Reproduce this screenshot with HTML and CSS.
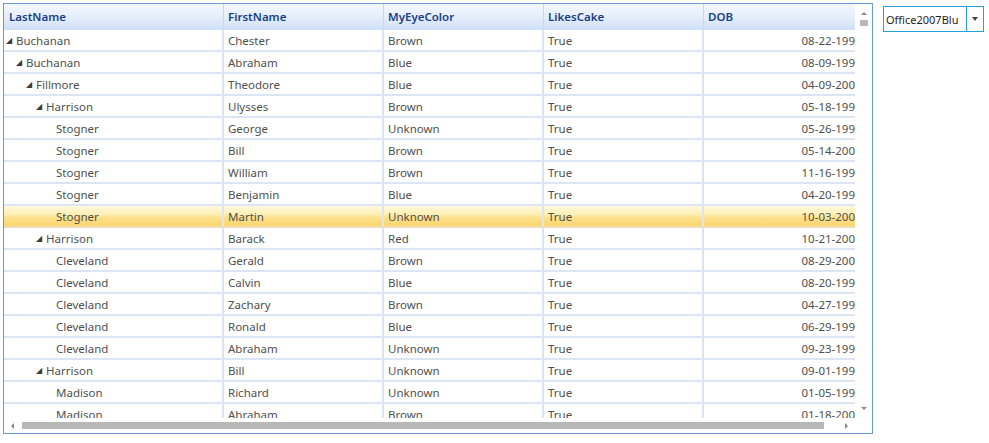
FILE: index.html
```html
<!DOCTYPE html>
<html>
<head>
<meta charset="utf-8">
<link rel="stylesheet" href="styles.css">
</head>
<body>
<div class="page">
  <div class="grid">
    <div class="top">
      <div class="viewport">
        <div class="hdr">
          <div class="c c1">LastName</div>
          <div class="c c2">FirstName</div>
          <div class="c c3">MyEyeColor</div>
          <div class="c c4">LikesCake</div>
          <div class="c c5">DOB</div>
        </div>
        <div class="row"><div class="c c1"><span class="ind l0"></span><span class="exp">◢</span>Buchanan</div><div class="c c2">Chester</div><div class="c c3">Brown</div><div class="c c4">True</div><div class="c c5">08-22-199</div></div>
        <div class="row"><div class="c c1"><span class="ind l1"></span><span class="exp">◢</span>Buchanan</div><div class="c c2">Abraham</div><div class="c c3">Blue</div><div class="c c4">True</div><div class="c c5">08-09-199</div></div>
        <div class="row"><div class="c c1"><span class="ind l2"></span><span class="exp">◢</span>Fillmore</div><div class="c c2">Theodore</div><div class="c c3">Blue</div><div class="c c4">True</div><div class="c c5">04-09-200</div></div>
        <div class="row"><div class="c c1"><span class="ind l3"></span><span class="exp">◢</span>Harrison</div><div class="c c2">Ulysses</div><div class="c c3">Brown</div><div class="c c4">True</div><div class="c c5">05-18-199</div></div>
        <div class="row"><div class="c c1"><span class="ind l4"></span>Stogner</div><div class="c c2">George</div><div class="c c3">Unknown</div><div class="c c4">True</div><div class="c c5">05-26-199</div></div>
        <div class="row"><div class="c c1"><span class="ind l4"></span>Stogner</div><div class="c c2">Bill</div><div class="c c3">Brown</div><div class="c c4">True</div><div class="c c5">05-14-200</div></div>
        <div class="row"><div class="c c1"><span class="ind l4"></span>Stogner</div><div class="c c2">William</div><div class="c c3">Brown</div><div class="c c4">True</div><div class="c c5">11-16-199</div></div>
        <div class="row"><div class="c c1"><span class="ind l4"></span>Stogner</div><div class="c c2">Benjamin</div><div class="c c3">Blue</div><div class="c c4">True</div><div class="c c5">04-20-199</div></div>
        <div class="row sel"><div class="c c1"><span class="ind l4"></span>Stogner</div><div class="c c2">Martin</div><div class="c c3">Unknown</div><div class="c c4">True</div><div class="c c5">10-03-200</div></div>
        <div class="row"><div class="c c1"><span class="ind l3"></span><span class="exp">◢</span>Harrison</div><div class="c c2">Barack</div><div class="c c3">Red</div><div class="c c4">True</div><div class="c c5">10-21-200</div></div>
        <div class="row"><div class="c c1"><span class="ind l4"></span>Cleveland</div><div class="c c2">Gerald</div><div class="c c3">Brown</div><div class="c c4">True</div><div class="c c5">08-29-200</div></div>
        <div class="row"><div class="c c1"><span class="ind l4"></span>Cleveland</div><div class="c c2">Calvin</div><div class="c c3">Blue</div><div class="c c4">True</div><div class="c c5">08-20-199</div></div>
        <div class="row"><div class="c c1"><span class="ind l4"></span>Cleveland</div><div class="c c2">Zachary</div><div class="c c3">Brown</div><div class="c c4">True</div><div class="c c5">04-27-199</div></div>
        <div class="row"><div class="c c1"><span class="ind l4"></span>Cleveland</div><div class="c c2">Ronald</div><div class="c c3">Blue</div><div class="c c4">True</div><div class="c c5">06-29-199</div></div>
        <div class="row"><div class="c c1"><span class="ind l4"></span>Cleveland</div><div class="c c2">Abraham</div><div class="c c3">Unknown</div><div class="c c4">True</div><div class="c c5">09-23-199</div></div>
        <div class="row"><div class="c c1"><span class="ind l3"></span><span class="exp">◢</span>Harrison</div><div class="c c2">Bill</div><div class="c c3">Unknown</div><div class="c c4">True</div><div class="c c5">09-01-199</div></div>
        <div class="row"><div class="c c1"><span class="ind l4"></span>Madison</div><div class="c c2">Richard</div><div class="c c3">Unknown</div><div class="c c4">True</div><div class="c c5">01-05-199</div></div>
        <div class="row"><div class="c c1"><span class="ind l4"></span>Madison</div><div class="c c2">Abraham</div><div class="c c3">Brown</div><div class="c c4">True</div><div class="c c5">01-18-200</div></div>
      </div>
      <div class="vscroll">
        <span class="arr up"></span>
        <span class="vthumb"></span>
        <span class="vspace"></span>
        <span class="arr down"></span>
      </div>
    </div>
    <div class="hscroll">
      <span class="arr left"></span>
      <span class="hthumb"></span>
      <span class="arr right"></span>
      <span class="corner"></span>
    </div>
  </div>
  <div class="combo">
    <span class="combo-text">Office2007Blu</span>
    <span class="combo-btn"><span class="arr down dk"></span></span>
  </div>
</div>
</body>
</html>
```

FILE: styles.css
```css
html, body {
  margin: 0;
  padding: 0;
  background: #ffffff;
}
.page {
  display: flex;
  align-items: flex-start;
  padding: 3px 0 0 3px;
  gap: 10px;
  font-family: "Noto Sans", "Open Sans", sans-serif;
  font-size: 11.5px;
}
.grid {
  width: 868px;
  height: 429px;
  border: 1px solid #6a9ad4;
  display: flex;
  flex-direction: column;
  overflow: hidden;
}
.top {
  display: flex;
  height: 414px;
}
.viewport {
  width: 851px;
  height: 414px;
  overflow: hidden;
  flex: none;
}
.hdr, .row {
  display: flex;
  width: 851px;
}
.hdr {
  height: 26px;
  background: linear-gradient(to bottom, #f4f8fe 0%, #e6effc 45%, #cfe0f8 100%);
}
.hdr .c {
  color: #1c3f87;
  font-weight: 600;
  line-height: 26px;
  border-right: 1px solid #c6d7ef;
}
.hdr .c1 { padding-left: 5px; }
.row {
  height: 22px;
  box-sizing: border-box;
  border-bottom: 2px solid #dbe5f3;
  color: #505050;
}
.row .c {
  line-height: 20px;
  padding-top: 1px;
  border-right: 2px solid #dbe5f3;
}
.c {
  flex: none;
  box-sizing: border-box;
  padding-left: 4px;
  white-space: nowrap;
  overflow: hidden;
}
.c1 { width: 220px; padding-left: 2px; }
.row .c1 { display: flex; align-items: flex-start; }
.c2 { width: 160px; }
.c3 { width: 160px; }
.c4 { width: 160px; }
.c5 { width: 151px; }
.row .c5 { text-align: right; padding-right: 0; border-right: none; }
.hdr .c5 { border-right: none; }
.row.sel {
  background: linear-gradient(to bottom, #fff8dc 0%, #fff0b8 40%, #fde08a 60%, #fcd56e 100%);
  border-bottom-color: #e9dcb6;
}
.ind { display: inline-block; flex: none; }
.l0 { width: 0; }
.l1 { width: 10px; }
.l2 { width: 20px; }
.l3 { width: 30px; }
.l4 { width: 50px; }
.exp {
  display: inline-block;
  width: 10px;
  flex: none;
  color: #3c3c3c;
  font-family: "DejaVu Sans", sans-serif;
  font-size: 8px;
  line-height: 20px;
}
.vscroll {
  width: 17px;
  flex: none;
  display: flex;
  flex-direction: column;
  align-items: center;
  padding-top: 8px;
  box-sizing: border-box;
}
.vthumb {
  width: 8px;
  height: 6px;
  background: #b8b8b8;
  margin-top: 5px;
}
.vspace { flex: 1; }
.vscroll .down { margin-bottom: 8px; }
.arr {
  width: 0;
  height: 0;
  display: block;
  flex: none;
}
.up {
  border-left: 3px solid transparent;
  border-right: 3px solid transparent;
  border-bottom: 3px solid #8a8a8a;
}
.down {
  border-left: 3px solid transparent;
  border-right: 3px solid transparent;
  border-top: 3px solid #8a8a8a;
}
.left {
  border-top: 3px solid transparent;
  border-bottom: 3px solid transparent;
  border-right: 3px solid #8a8a8a;
}
.right {
  border-top: 3px solid transparent;
  border-bottom: 3px solid transparent;
  border-left: 3px solid #8a8a8a;
}
.hscroll {
  height: 15px;
  display: flex;
  align-items: center;
}
.hscroll .left { margin-left: 7px; }
.hthumb {
  width: 802px;
  height: 7px;
  background: #b8b8b8;
  margin-left: 8px;
}
.hscroll .right { margin-left: 21px; }
.corner { flex: 1; }
.combo {
  width: 99px;
  height: 24px;
  margin-top: 3px;
  border: 1px solid #25a0e0;
  display: flex;
  align-items: center;
  font-size: 11px;
  color: #1e1e1e;
}
.combo-text {
  width: 82px;
  padding-left: 2px;
  box-sizing: border-box;
  overflow: hidden;
  white-space: nowrap;
  flex: none;
}
.combo-btn {
  flex: 1;
  height: 24px;
  border-left: 1px solid #25a0e0;
  display: flex;
  align-items: center;
  justify-content: center;
}
.dk.down {
  border-left-width: 3.5px;
  border-right-width: 3.5px;
  border-top: 4px solid #444;
}
```
